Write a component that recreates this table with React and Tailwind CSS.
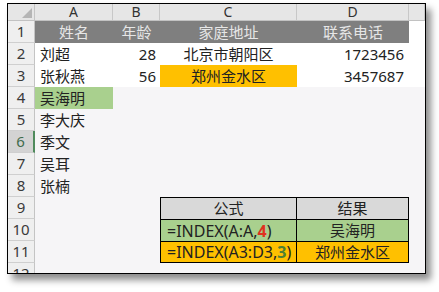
import React from 'react';

const grid = 'grid grid-cols-[27px_78px_47px_137px_112px_16px]';
const font = { fontFamily: '"Noto Sans", "Noto Sans CJK SC", sans-serif' };

const names = ['吴海明', '李大庆', '季文', '吴耳', '张楠'];

const RowHead = ({ n, active }) => (
  <div
    className={`flex items-center justify-center text-[15px] leading-none border-b border-[#cfcfcf] ${
      active ? 'bg-[#d3d3d3] text-[#3f6b4c] border-r-2 border-r-[#4f8a5c]' : 'bg-[#efefef] text-[#3a3a3a] border-r border-r-[#c4c4c4]'
    }`}
  >
    {n}
  </div>
);

const App = () => {
  return (
    <div className="w-[439px] h-[292px] bg-white pt-[3px] pl-[7px]" style={font}>
      <div className="w-[419px] h-[271px] border border-black overflow-hidden bg-[#f6f5f7] shadow-[5px_6px_7px_rgba(0,0,0,0.45)]">
        {/* column letters */}
        <div className={`${grid} h-[17px] bg-[#e6e6e6] border-b border-[#c2c2c2] text-[14px] leading-none text-[#333]`}>
          <div className="relative border-r border-[#c4c4c4]">
            <svg className="absolute right-[2px] bottom-[2px]" width="10" height="10" viewBox="0 0 10 10">
              <polygon points="10,0 10,10 0,10" fill="#b5b5b5" />
            </svg>
          </div>
          {['A', 'B', 'C', 'D', ''].map((c, i) => (
            <div key={i} className="flex items-center justify-center border-r border-[#c8c8c8]">
              {c}
            </div>
          ))}
        </div>

        {/* row 1 */}
        <div className={`${grid} h-[22px]`}>
          <RowHead n={1} />
          {['姓名', '年龄', '家庭地址', '联系电话'].map((t) => (
            <div key={t} className="flex items-center justify-center bg-[#7f7f7f] text-[#e6e6e6] text-[15px] leading-none">
              {t}
            </div>
          ))}
          <div className="bg-white" />
        </div>

        {/* row 2 */}
        <div className={`${grid} h-[22px] text-[15px] leading-none text-[#222]`}>
          <RowHead n={2} />
          <div className="flex items-center pl-[5px] bg-white">刘超</div>
          <div className="flex items-center justify-end pr-[4px] bg-white">28</div>
          <div className="flex items-center justify-center bg-white">北京市朝阳区</div>
          <div className="flex items-center justify-end pr-[5px] bg-white">1723456</div>
          <div className="bg-white" />
        </div>

        {/* row 3 */}
        <div className={`${grid} h-[22px] text-[15px] leading-none text-[#222]`}>
          <RowHead n={3} />
          <div className="flex items-center pl-[5px] bg-white">张秋燕</div>
          <div className="flex items-center justify-end pr-[4px] bg-white">56</div>
          <div className="flex items-center justify-center bg-[#ffc000]">郑州金水区</div>
          <div className="flex items-center justify-end pr-[5px] bg-white">3457687</div>
          <div className="bg-white" />
        </div>

        {/* rows 4-8 */}
        {names.map((name, i) => (
          <div key={name} className={`${grid} h-[22px] text-[15px] leading-none text-[#222]`}>
            <RowHead n={i + 4} active={i + 4 === 6} />
            <div className={`flex items-center pl-[5px] ${i === 0 ? 'bg-[#a9d08e]' : ''}`}>{name}</div>
            <div />
            <div />
            <div />
            <div />
          </div>
        ))}

        {/* row 9 */}
        <div className={`${grid} h-[22px] text-[15px] leading-none text-[#222]`}>
          <RowHead n={9} />
          <div />
          <div />
          <div className="flex items-center justify-center bg-[#d9d9d9] border-t border-l border-r border-black">公式</div>
          <div className="flex items-center justify-center bg-[#d9d9d9] border-t border-r border-black">结果</div>
          <div />
        </div>

        {/* row 10 */}
        <div className={`${grid} h-[22px] text-[15px] leading-none text-[#222]`}>
          <RowHead n={10} />
          <div />
          <div />
          <div className="flex items-center pl-[6px] text-[16px] bg-[#a9d08e] border-t border-l border-r border-black">
            =INDEX(A:A,<span className="font-bold text-[#e0321e]">4</span>)
          </div>
          <div className="flex items-center justify-center bg-[#a9d08e] border-t border-r border-black">吴海明</div>
          <div />
        </div>

        {/* row 11 */}
        <div className={`${grid} h-[22px] text-[15px] leading-none text-[#222]`}>
          <RowHead n={11} />
          <div />
          <div />
          <div className="flex items-center pl-[6px] text-[16px] bg-[#ffc000] border border-black">
            =INDEX(A3:D3,<span className="font-bold text-[#4f7f33]">3</span>)
          </div>
          <div className="flex items-center justify-center bg-[#ffc000] border-t border-r border-b border-black">郑州金水区</div>
          <div />
        </div>

        {/* row 12, cut off */}
        <div className={`${grid} h-[22px] text-[15px] leading-none`}>
          <RowHead n={12} />
        </div>
      </div>
    </div>
  );
};

export default App;
